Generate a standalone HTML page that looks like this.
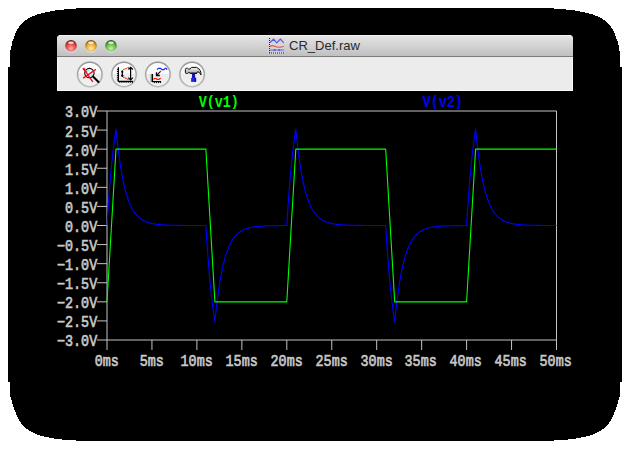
<!DOCTYPE html>
<html><head><meta charset="utf-8"><title>CR_Def.raw</title>
<style>
html,body{margin:0;padding:0;background:#fff;}
body{width:630px;height:449px;overflow:hidden;position:relative;font-family:"Liberation Sans",sans-serif;}
svg{position:absolute;left:0;top:0;display:block}
.mono text{font-family:"Liberation Mono",monospace;font-weight:normal;font-size:13.4px;fill:#c8c8c8;stroke:#c8c8c8;stroke-width:0.55px;}
.ttl{font-family:"Liberation Sans",sans-serif;font-size:13px;fill:#2a2a2a;}
</style></head><body>
<svg width="630" height="449" viewBox="0 0 630 449">
<defs>
<linearGradient id="tb" x1="0" y1="0" x2="0" y2="1"><stop offset="0" stop-color="#e6e6e6"/><stop offset="1" stop-color="#c0c0c0"/></linearGradient>
<linearGradient id="btn" x1="0" y1="0" x2="0" y2="1"><stop offset="0" stop-color="#ffffff"/><stop offset="0.5" stop-color="#f7f7f7"/><stop offset="0.5" stop-color="#ebebeb"/><stop offset="1" stop-color="#f3f3f3"/></linearGradient>
<linearGradient id="hm" x1="0" y1="0" x2="0" y2="1"><stop offset="0" stop-color="#f4f4f4"/><stop offset="0.45" stop-color="#c8c8c8"/><stop offset="1" stop-color="#8c8c8c"/></linearGradient>
<linearGradient id="bst" x1="0" y1="0" x2="0" y2="1"><stop offset="0" stop-color="#969696"/><stop offset="1" stop-color="#b8b8b8"/></linearGradient>
<linearGradient id="rdo" x1="0" y1="0" x2="0" y2="1"><stop offset="0" stop-color="#6a1010"/><stop offset="1" stop-color="#d88"/></linearGradient>
<linearGradient id="ylo" x1="0" y1="0" x2="0" y2="1"><stop offset="0" stop-color="#7a4a06"/><stop offset="1" stop-color="#e8c070"/></linearGradient>
<linearGradient id="gno" x1="0" y1="0" x2="0" y2="1"><stop offset="0" stop-color="#215416"/><stop offset="1" stop-color="#9c8"/></linearGradient>
<radialGradient id="rd" cx="0.5" cy="0.75" r="0.7"><stop offset="0" stop-color="#ffb0b0"/><stop offset="0.6" stop-color="#f0504c"/><stop offset="1" stop-color="#c42a28"/></radialGradient>
<radialGradient id="yl" cx="0.5" cy="0.75" r="0.7"><stop offset="0" stop-color="#ffeab0"/><stop offset="0.6" stop-color="#f4b440"/><stop offset="1" stop-color="#c88418"/></radialGradient>
<radialGradient id="gn" cx="0.5" cy="0.75" r="0.7"><stop offset="0" stop-color="#c8f0a8"/><stop offset="0.6" stop-color="#74c450"/><stop offset="1" stop-color="#3e9428"/></radialGradient>
<clipPath id="pc"><rect x="107" y="111" width="450" height="229"/></clipPath>
</defs>
<path d="M8.0 67.0 L10.0 67.0 L10.0 55.0 L10.5 50.5 L11.5 45.5 L12.5 41.5 L13.1 40.0 L15.6 33.0 L18.4 27.8 L22.8 22.2 L29.1 17.8 L37.3 14.5 L46.7 12.2 L57.8 10.0 L70.0 9.0 L76.0 9.0 L76.0 8.0 L554.0 8.0 L554.0 9.0 L560.0 9.0 L572.2 10.0 L583.3 12.2 L592.7 14.5 L600.9 17.8 L607.2 22.2 L611.6 27.8 L614.4 33.0 L616.9 40.0 L617.5 41.5 L618.5 45.5 L619.5 50.5 L620.0 55.0 L620.0 67.0 L622.0 67.0 L622.0 382.0 L620.0 382.0 L620.0 395.0 L618.9 399.0 L617.2 404.6 L615.0 411.2 L612.2 417.9 L608.3 424.0 L603.3 428.8 L597.7 432.4 L591.1 435.2 L583.3 437.2 L574.4 438.7 L567.7 439.6 L560.0 440.2 L554.0 440.4 L554.0 441.0 L76.0 441.0 L76.0 440.4 L70.0 440.2 L62.3 439.6 L55.6 438.7 L46.7 437.2 L38.9 435.2 L32.3 432.4 L26.7 428.8 L21.7 424.0 L17.8 417.9 L15.0 411.2 L12.8 404.6 L11.1 399.0 L10.0 395.0 L10.0 382.0 L8.0 382.0Z" fill="#000" shape-rendering="crispEdges"/>
<!-- window -->
<path d="M57 91 V39 Q57 35 61 35 H569 Q573 35 573 39 V91 Z" fill="#ececec"/>
<path d="M57 56 V39 Q57 35 61 35 H569 Q573 35 573 39 V56 Z" fill="url(#tb)"/>
<path d="M59 35.5 H571" stroke="#f2f2f2" stroke-width="1"/>
<rect x="57" y="56" width="516" height="1" fill="#7c7c7c"/>
<rect x="57" y="90" width="516" height="1" fill="#f8f8f8"/>
<rect x="57" y="57" width="1" height="34" fill="#f8f8f8"/>
<rect x="572" y="57" width="1" height="34" fill="#f8f8f8"/>
<!-- traffic lights -->
<g>
<ellipse cx="71" cy="46.9" rx="6" ry="5.8" fill="#ffffff" opacity="0.45"/>
<ellipse cx="91" cy="46.9" rx="6" ry="5.8" fill="#ffffff" opacity="0.45"/>
<ellipse cx="111" cy="46.9" rx="6" ry="5.8" fill="#ffffff" opacity="0.45"/>
<circle cx="71" cy="45.9" r="5.9" fill="url(#rdo)"/>
<circle cx="91" cy="45.9" r="5.9" fill="url(#ylo)"/>
<circle cx="111" cy="45.9" r="5.9" fill="url(#gno)"/>
<circle cx="71" cy="46.1" r="4.9" fill="url(#rd)"/>
<circle cx="91" cy="46.1" r="4.9" fill="url(#yl)"/>
<circle cx="111" cy="46.1" r="4.9" fill="url(#gn)"/>
<ellipse cx="71" cy="42.7" rx="2.9" ry="1.3" fill="#fff" opacity="0.75"/>
<ellipse cx="91" cy="42.7" rx="2.9" ry="1.3" fill="#fff" opacity="0.75"/>
<ellipse cx="111" cy="42.7" rx="2.9" ry="1.3" fill="#fff" opacity="0.75"/>
</g>
<!-- title -->
<g id="ticon">
<rect x="268" y="38" width="16" height="16" fill="#d6d6d6" opacity="0.8"/>
<path d="M269.5 38 V53.5" stroke="#222" fill="none" stroke-width="1" stroke-dasharray="1 1"/>
<path d="M269 53 H284" stroke="#222" fill="none" stroke-width="1" stroke-dasharray="1 1"/>
<path d="M270 42.6 L273.5 39.2 L276.8 42.8 L280.3 39.2 L283.8 42.8" stroke="#5656e6" fill="none" stroke-width="1.2"/>
<path d="M270 46.4 Q272 45 274.5 46.2 T280 47.2 T283.8 46" stroke="#e45050" fill="none" stroke-width="1.2"/>
<rect x="270" y="49" width="14" height="2.2" fill="#9a9ad8"/>
<path d="M273.5 50 h2 M278.5 50 h1.6" stroke="#3030c0" stroke-width="1"/>
</g>
<text class="ttl" x="289" y="50.4" textLength="71" lengthAdjust="spacingAndGlyphs">CR_Def.raw</text>
<!-- toolbar buttons -->
<g fill="none" stroke="#dcdcdc" stroke-width="0.9">
<circle cx="89.8" cy="74.5" r="13.1"/><circle cx="124" cy="74.5" r="13.1"/><circle cx="157.9" cy="74.5" r="13.1"/><circle cx="192.1" cy="74.5" r="13.1"/>
</g>
<g fill="url(#btn)" stroke="url(#bst)" stroke-width="1.4">
<circle cx="89.8" cy="74.4" r="12.2"/><circle cx="124" cy="74.4" r="12.2"/><circle cx="157.9" cy="74.4" r="12.2"/><circle cx="192.1" cy="74.4" r="12.2"/>
</g>
<!-- icon1 -->
<g>
<circle cx="89.4" cy="73.1" r="4.7" fill="#f2ffff" stroke="#0a0a0a" stroke-width="1.1"/>
<path d="M86.2 71.8 Q87.2 69.6 89.8 69.4 L88 72.6 Z" fill="#7ef0f6"/>
<path d="M92.8 74 Q92.4 76.6 89.6 76.9 L91 74.2 Z" fill="#7ef0f6"/>
<path d="M93 76.6 L98.5 82" stroke="#000" stroke-width="2.1" stroke-linecap="round"/>
<path d="M83.2 68.1 L92.8 81.9 M95.9 69.4 L83.2 78.1" stroke="#ff0a1e" stroke-width="1.4"/>
<path d="M83.2 68.1 L86 72" stroke="#ff0a1e" stroke-width="2"/>
</g>
<!-- icon2 -->
<g fill="none">
<path d="M118.4 67.2 V81.4 H132.9" stroke="#000" stroke-width="1.2"/>
<path d="M116.9 69.4h1.2 M116.9 71.5h1.2 M116.9 73.6h1.2 M116.9 75.7h1.2 M116.9 77.8h1.2 M116.9 79.9h1.2 M119.8 81.8v1.1 M121.9 81.8v1.1 M124 81.8v1.1 M126.1 81.8v1.1 M128.2 81.8v1.1 M130.3 81.8v1.1 M132.4 81.8v1.1" stroke="#000" stroke-width="1"/>
<path d="M128.9 67.4 L123.1 69.8" stroke="#ff3414" stroke-width="1.2" stroke-dasharray="1.6 0.7"/>
<path d="M123.1 76.9 L128.9 79.7" stroke="#ff3414" stroke-width="1.2" stroke-dasharray="1.6 0.7"/>
<path d="M122.3 70.6 V76.8" stroke="#000" stroke-width="1.3"/>
<path d="M120.8 72.3 L122.3 70.2 L123.8 72.3 Z M120.8 75.1 L122.3 77.2 L123.8 75.1 Z" fill="#000"/>
<path d="M130.6 67.4 V79.8" stroke="#000" stroke-width="1.2"/>
<path d="M128.4 69.5 L130.6 67.3 L132.8 69.5 M128.4 77.7 L130.6 79.9 L132.8 77.7" stroke="#000" stroke-width="1.2"/>
</g>
<!-- icon3 -->
<g fill="none">
<path d="M157 69.6 L158.3 68.3 H160.6 L161.9 69.6 H164 L165.1 68.4 H166.1 L167.1 69.7" stroke="#2222ff" stroke-width="1.2" stroke-linejoin="round"/>
<path d="M160.3 71.7 L156.8 75.1" stroke="#000" stroke-width="1.1"/>
<path d="M156.5 72.2 V75.5 H159.8" stroke="#000" stroke-width="1.3"/>
<rect x="160.1" y="70.8" width="1.1" height="1.1" fill="#c01818"/>
<path d="M152.5 73.9 V81.6 H161.1" stroke="#000" stroke-width="1.1"/>
<path d="M150.6 75h1.4 M150.6 77h1.4 M150.6 79h1.4 M150.6 81h1.4 M154.5 82v1.1 M156.5 82v1.1 M158.5 82v1.1 M160.5 82v1.1" stroke="#000" stroke-width="0.9"/>
<path d="M153.4 79.4 L154.5 78.5 H156 L157 79.4 H158.8 L160 78.6 L160.9 78.3" stroke="#ff1212" stroke-width="1.2" stroke-linejoin="round"/>
</g>
<!-- icon4 hammer -->
<g>
<path d="M185.4 69.4 Q185.4 68.3 186.6 68.3 H187.6 L188.8 69.3 L190 69 L191.4 67.4 H196.6 L198.8 68.7 L200.2 70.6 L200.9 72.6 V74.9 L199.6 72.7 L197.6 71.6 L196.8 73.3 H190.2 L188.9 72.4 L187.4 73.5 H186.4 Q185.4 73.5 185.4 72.4 Z" fill="url(#hm)" stroke="#0a0a0a" stroke-width="1" stroke-linejoin="round"/>
<rect x="190.2" y="72.7" width="6.8" height="1.2" fill="#111"/>
<rect x="192" y="73.8" width="3.1" height="4.4" fill="#1616b8"/>
<rect x="191.1" y="77.8" width="5" height="4.1" fill="#2222e2"/>
<rect x="194.6" y="77.8" width="1.5" height="4.1" fill="#1010a8"/>
</g>
<!-- plot -->
<g stroke="#c4c4c4" stroke-width="1" fill="none" shape-rendering="auto">
<path d="M107 111 H556.5 V340 H107 Z"/>
<line x1="97" y1="111.00" x2="107" y2="111.00"/><line x1="97" y1="130.08" x2="107" y2="130.08"/><line x1="97" y1="149.17" x2="107" y2="149.17"/><line x1="97" y1="168.25" x2="107" y2="168.25"/><line x1="97" y1="187.33" x2="107" y2="187.33"/><line x1="97" y1="206.42" x2="107" y2="206.42"/><line x1="97" y1="225.50" x2="107" y2="225.50"/><line x1="97" y1="244.58" x2="107" y2="244.58"/><line x1="97" y1="263.67" x2="107" y2="263.67"/><line x1="97" y1="282.75" x2="107" y2="282.75"/><line x1="97" y1="301.83" x2="107" y2="301.83"/><line x1="97" y1="320.92" x2="107" y2="320.92"/><line x1="97" y1="340.00" x2="107" y2="340.00"/><line x1="107.00" y1="340" x2="107.00" y2="350"/><line x1="151.95" y1="340" x2="151.95" y2="350"/><line x1="196.90" y1="340" x2="196.90" y2="350"/><line x1="241.85" y1="340" x2="241.85" y2="350"/><line x1="286.80" y1="340" x2="286.80" y2="350"/><line x1="331.75" y1="340" x2="331.75" y2="350"/><line x1="376.70" y1="340" x2="376.70" y2="350"/><line x1="421.65" y1="340" x2="421.65" y2="350"/><line x1="466.60" y1="340" x2="466.60" y2="350"/><line x1="511.55" y1="340" x2="511.55" y2="350"/><line x1="556.50" y1="340" x2="556.50" y2="350"/>
</g>
<g class="mono">
<text transform="translate(97.20 116.90) scale(1.000 1.200)" text-anchor="end">3.0V</text><text transform="translate(97.20 136.90) scale(1.000 1.200)" text-anchor="end">2.5V</text><text transform="translate(97.20 155.90) scale(1.000 1.200)" text-anchor="end">2.0V</text><text transform="translate(97.20 174.90) scale(1.000 1.200)" text-anchor="end">1.5V</text><text transform="translate(97.20 193.90) scale(1.000 1.200)" text-anchor="end">1.0V</text><text transform="translate(97.20 212.90) scale(1.000 1.200)" text-anchor="end">0.5V</text><text transform="translate(97.20 231.90) scale(1.000 1.200)" text-anchor="end">0.0V</text><text transform="translate(97.20 250.90) scale(1.000 1.200)" text-anchor="end">−0.5V</text><text transform="translate(97.20 269.90) scale(1.000 1.200)" text-anchor="end">−1.0V</text><text transform="translate(97.20 288.90) scale(1.000 1.200)" text-anchor="end">−1.5V</text><text transform="translate(97.20 307.90) scale(1.000 1.200)" text-anchor="end">−2.0V</text><text transform="translate(97.20 326.90) scale(1.000 1.200)" text-anchor="end">−2.5V</text><text transform="translate(97.20 345.90) scale(1.000 1.200)" text-anchor="end">−3.0V</text>
<text transform="translate(106.75 366.30) scale(1.000 1.200)" text-anchor="middle">0ms</text><text transform="translate(151.75 366.30) scale(1.000 1.200)" text-anchor="middle">5ms</text><text transform="translate(196.66 366.30) scale(1.000 1.200)" text-anchor="middle">10ms</text><text transform="translate(241.66 366.30) scale(1.000 1.200)" text-anchor="middle">15ms</text><text transform="translate(286.66 366.30) scale(1.000 1.200)" text-anchor="middle">20ms</text><text transform="translate(331.66 366.30) scale(1.000 1.200)" text-anchor="middle">25ms</text><text transform="translate(376.66 366.30) scale(1.000 1.200)" text-anchor="middle">30ms</text><text transform="translate(420.66 366.30) scale(1.000 1.200)" text-anchor="middle">35ms</text><text transform="translate(465.66 366.30) scale(1.000 1.200)" text-anchor="middle">40ms</text><text transform="translate(510.66 366.30) scale(1.000 1.200)" text-anchor="middle">45ms</text><text transform="translate(555.66 366.30) scale(1.000 1.200)" text-anchor="middle">50ms</text>
<text transform="translate(198.70 106.9) scale(1 1.200)" style="fill:#00ff00;stroke:none;font-weight:bold">V</text><text transform="translate(206.74 105.8) scale(1 1.046)" style="fill:#00ff00;stroke:none;font-weight:bold">(</text><text transform="translate(214.78 106.9) scale(1 1.200)" style="fill:#00ff00;stroke:none;font-weight:bold">v</text><text transform="translate(222.82 106.9) scale(1 1.200)" style="fill:#00ff00;stroke:none;font-weight:bold">1</text><text transform="translate(230.86 105.8) scale(1 1.046)" style="fill:#00ff00;stroke:none;font-weight:bold">)</text>
<text transform="translate(422.60 106.9) scale(1 1.200)" style="fill:#0000ff;stroke:none;font-weight:bold">V</text><text transform="translate(430.64 105.8) scale(1 1.046)" style="fill:#0000ff;stroke:none;font-weight:bold">(</text><text transform="translate(438.68 106.9) scale(1 1.200)" style="fill:#0000ff;stroke:none;font-weight:bold">v</text><text transform="translate(446.72 106.9) scale(1 1.200)" style="fill:#0000ff;stroke:none;font-weight:bold">2</text><text transform="translate(454.76 105.8) scale(1 1.046)" style="fill:#0000ff;stroke:none;font-weight:bold">)</text>
</g>
<g fill="none" stroke-width="1.1" stroke-linejoin="round">
<path d="M107.00 225.50 L107.45 218.15 L107.90 211.14 L108.35 204.47 L108.80 198.11 L109.25 192.05 L109.70 186.28 L110.15 180.79 L110.60 175.55 L111.05 170.56 L111.50 165.81 L111.94 161.29 L112.39 156.98 L112.84 152.87 L113.29 148.96 L113.74 145.23 L114.19 141.68 L114.64 138.30 L115.09 135.07 L115.54 132.00 L115.99 129.08 L116.44 133.65 L116.89 138.00 L117.34 142.15 L117.79 146.10 L118.24 149.86 L118.69 153.44 L119.14 156.86 L119.59 160.11 L120.04 163.21 L120.48 166.16 L120.93 168.97 L121.38 171.65 L121.83 174.20 L122.28 176.63 L122.73 178.95 L123.18 181.15 L123.63 183.26 L124.08 185.26 L124.53 187.16 L124.98 188.98 L125.43 190.71 L125.88 192.36 L126.33 193.93 L126.78 195.43 L127.23 196.85 L127.68 198.21 L128.13 199.50 L128.58 200.73 L129.03 201.91 L129.47 203.03 L129.92 204.09 L130.37 205.10 L130.82 206.07 L131.27 206.99 L131.72 207.87 L132.17 208.70 L132.62 209.50 L133.07 210.26 L133.52 210.98 L133.97 211.67 L134.42 212.32 L134.87 212.95 L135.32 213.54 L135.77 214.11 L136.22 214.65 L136.67 215.16 L137.12 215.65 L137.57 216.12 L138.02 216.56 L138.47 216.99 L138.91 217.39 L139.36 217.78 L139.81 218.14 L140.26 218.49 L140.71 218.82 L141.16 219.14 L141.61 219.44 L142.06 219.73 L142.51 220.00 L142.96 220.26 L143.41 220.51 L143.86 220.75 L144.31 220.97 L144.76 221.19 L145.21 221.39 L145.66 221.58 L146.11 221.77 L146.56 221.95 L147.01 222.12 L147.45 222.28 L147.90 222.43 L148.35 222.57 L148.80 222.71 L149.25 222.84 L149.70 222.97 L150.15 223.09 L150.60 223.20 L151.05 223.31 L151.50 223.42 L151.95 223.52 L152.40 223.61 L152.85 223.70 L153.30 223.78 L153.75 223.87 L154.20 223.94 L154.65 224.02 L155.10 224.09 L155.55 224.15 L156.00 224.22 L156.44 224.28 L156.89 224.34 L157.34 224.39 L157.79 224.44 L158.24 224.49 L158.69 224.54 L159.14 224.59 L159.59 224.63 L160.04 224.67 L160.49 224.71 L160.94 224.75 L161.39 224.78 L161.84 224.82 L162.29 224.85 L162.74 224.88 L163.19 224.91 L163.64 224.94 L164.09 224.96 L164.54 224.99 L164.99 225.01 L165.44 225.04 L165.88 225.06 L166.33 225.08 L166.78 225.10 L167.23 225.12 L167.68 225.14 L168.13 225.15 L168.58 225.17 L169.03 225.19 L169.48 225.20 L169.93 225.22 L170.38 225.23 L170.83 225.24 L171.28 225.25 L171.73 225.27 L172.18 225.28 L172.63 225.29 L173.08 225.30 L173.53 225.31 L173.98 225.32 L174.43 225.32 L174.87 225.33 L175.32 225.34 L175.77 225.35 L176.22 225.36 L176.67 225.36 L177.12 225.37 L177.57 225.38 L178.02 225.38 L178.47 225.39 L178.92 225.39 L179.37 225.40 L179.82 225.40 L180.27 225.41 L180.72 225.41 L181.17 225.42 L181.62 225.42 L182.07 225.42 L182.52 225.43 L182.97 225.43 L183.42 225.43 L183.86 225.44 L184.31 225.44 L184.76 225.44 L185.21 225.45 L185.66 225.45 L186.11 225.45 L186.56 225.45 L187.01 225.46 L187.46 225.46 L187.91 225.46 L188.36 225.46 L188.81 225.46 L189.26 225.46 L189.71 225.47 L190.16 225.47 L190.61 225.47 L191.06 225.47 L191.51 225.47 L191.96 225.47 L192.41 225.47 L192.85 225.48 L193.30 225.48 L193.75 225.48 L194.20 225.48 L194.65 225.48 L195.10 225.48 L195.55 225.48 L196.00 225.48 L196.45 225.48 L196.90 225.48 L197.35 225.49 L197.80 225.49 L198.25 225.49 L198.70 225.49 L199.15 225.49 L199.60 225.49 L200.05 225.49 L200.50 225.49 L200.95 225.49 L201.39 225.49 L201.84 225.49 L202.29 225.49 L202.74 225.49 L203.19 225.49 L203.64 225.49 L204.09 225.49 L204.54 225.49 L204.99 225.49 L205.44 225.49 L205.89 225.49 L206.34 232.85 L206.79 239.85 L207.24 246.53 L207.69 252.89 L208.14 258.94 L208.59 264.71 L209.04 270.21 L209.49 275.44 L209.94 280.43 L210.38 285.18 L210.83 289.71 L211.28 294.02 L211.73 298.13 L212.18 302.04 L212.63 305.77 L213.08 309.32 L213.53 312.70 L213.98 315.92 L214.43 318.99 L214.88 321.92 L215.33 317.35 L215.78 313.00 L216.23 308.85 L216.68 304.90 L217.13 301.14 L217.58 297.55 L218.03 294.14 L218.48 290.89 L218.93 287.79 L219.38 284.84 L219.82 282.03 L220.27 279.35 L220.72 276.80 L221.17 274.37 L221.62 272.05 L222.07 269.84 L222.52 267.74 L222.97 265.74 L223.42 263.83 L223.87 262.02 L224.32 260.29 L224.77 258.64 L225.22 257.07 L225.67 255.57 L226.12 254.15 L226.57 252.79 L227.02 251.50 L227.47 250.27 L227.92 249.09 L228.37 247.97 L228.81 246.91 L229.26 245.89 L229.71 244.93 L230.16 244.01 L230.61 243.13 L231.06 242.30 L231.51 241.50 L231.96 240.74 L232.41 240.02 L232.86 239.33 L233.31 238.68 L233.76 238.05 L234.21 237.46 L234.66 236.89 L235.11 236.35 L235.56 235.84 L236.01 235.35 L236.46 234.88 L236.91 234.44 L237.35 234.01 L237.80 233.61 L238.25 233.22 L238.70 232.86 L239.15 232.51 L239.60 232.18 L240.05 231.86 L240.50 231.56 L240.95 231.27 L241.40 231.00 L241.85 230.74 L242.30 230.49 L242.75 230.25 L243.20 230.03 L243.65 229.81 L244.10 229.61 L244.55 229.41 L245.00 229.23 L245.45 229.05 L245.90 228.88 L246.34 228.72 L246.79 228.57 L247.24 228.43 L247.69 228.29 L248.14 228.16 L248.59 228.03 L249.04 227.91 L249.49 227.80 L249.94 227.69 L250.39 227.58 L250.84 227.48 L251.29 227.39 L251.74 227.30 L252.19 227.22 L252.64 227.13 L253.09 227.06 L253.54 226.98 L253.99 226.91 L254.44 226.85 L254.89 226.78 L255.34 226.72 L255.78 226.66 L256.23 226.61 L256.68 226.56 L257.13 226.51 L257.58 226.46 L258.03 226.41 L258.48 226.37 L258.93 226.33 L259.38 226.29 L259.83 226.25 L260.28 226.22 L260.73 226.18 L261.18 226.15 L261.63 226.12 L262.08 226.09 L262.53 226.06 L262.98 226.03 L263.43 226.01 L263.88 225.99 L264.32 225.96 L264.77 225.94 L265.22 225.92 L265.67 225.90 L266.12 225.88 L266.57 225.86 L267.02 225.85 L267.47 225.83 L267.92 225.81 L268.37 225.80 L268.82 225.78 L269.27 225.77 L269.72 225.76 L270.17 225.75 L270.62 225.73 L271.07 225.72 L271.52 225.71 L271.97 225.70 L272.42 225.69 L272.87 225.68 L273.31 225.68 L273.76 225.67 L274.21 225.66 L274.66 225.65 L275.11 225.64 L275.56 225.64 L276.01 225.63 L276.46 225.62 L276.91 225.62 L277.36 225.61 L277.81 225.61 L278.26 225.60 L278.71 225.60 L279.16 225.59 L279.61 225.59 L280.06 225.58 L280.51 225.58 L280.96 225.58 L281.41 225.57 L281.86 225.57 L282.31 225.57 L282.75 225.56 L283.20 225.56 L283.65 225.56 L284.10 225.55 L284.55 225.55 L285.00 225.55 L285.45 225.55 L285.90 225.54 L286.35 225.54 L286.80 225.54 L287.25 218.18 L287.70 211.18 L288.15 204.50 L288.60 198.14 L289.05 192.08 L289.50 186.31 L289.95 180.82 L290.40 175.58 L290.85 170.59 L291.29 165.84 L291.74 161.31 L292.19 157.00 L292.64 152.89 L293.09 148.98 L293.54 145.25 L293.99 141.70 L294.44 138.31 L294.89 135.09 L295.34 132.02 L295.79 129.10 L296.24 133.66 L296.69 138.02 L297.14 142.16 L297.59 146.11 L298.04 149.87 L298.49 153.46 L298.94 156.87 L299.39 160.12 L299.84 163.22 L300.28 166.17 L300.73 168.98 L301.18 171.66 L301.63 174.21 L302.08 176.64 L302.53 178.96 L302.98 181.16 L303.43 183.26 L303.88 185.26 L304.33 187.17 L304.78 188.99 L305.23 190.72 L305.68 192.37 L306.13 193.94 L306.58 195.43 L307.03 196.86 L307.48 198.21 L307.93 199.51 L308.38 200.74 L308.83 201.91 L309.27 203.03 L309.72 204.09 L310.17 205.11 L310.62 206.07 L311.07 206.99 L311.52 207.87 L311.97 208.71 L312.42 209.50 L312.87 210.26 L313.32 210.98 L313.77 211.67 L314.22 212.33 L314.67 212.95 L315.12 213.54 L315.57 214.11 L316.02 214.65 L316.47 215.17 L316.92 215.65 L317.37 216.12 L317.82 216.57 L318.26 216.99 L318.71 217.39 L319.16 217.78 L319.61 218.14 L320.06 218.49 L320.51 218.82 L320.96 219.14 L321.41 219.44 L321.86 219.73 L322.31 220.00 L322.76 220.26 L323.21 220.51 L323.66 220.75 L324.11 220.97 L324.56 221.19 L325.01 221.39 L325.46 221.59 L325.91 221.77 L326.36 221.95 L326.81 222.12 L327.25 222.28 L327.70 222.43 L328.15 222.57 L328.60 222.71 L329.05 222.85 L329.50 222.97 L329.95 223.09 L330.40 223.21 L330.85 223.31 L331.30 223.42 L331.75 223.52 L332.20 223.61 L332.65 223.70 L333.10 223.78 L333.55 223.87 L334.00 223.94 L334.45 224.02 L334.90 224.09 L335.35 224.15 L335.80 224.22 L336.25 224.28 L336.69 224.34 L337.14 224.39 L337.59 224.44 L338.04 224.49 L338.49 224.54 L338.94 224.59 L339.39 224.63 L339.84 224.67 L340.29 224.71 L340.74 224.75 L341.19 224.78 L341.64 224.82 L342.09 224.85 L342.54 224.88 L342.99 224.91 L343.44 224.94 L343.89 224.97 L344.34 224.99 L344.79 225.01 L345.24 225.04 L345.68 225.06 L346.13 225.08 L346.58 225.10 L347.03 225.12 L347.48 225.14 L347.93 225.15 L348.38 225.17 L348.83 225.19 L349.28 225.20 L349.73 225.22 L350.18 225.23 L350.63 225.24 L351.08 225.25 L351.53 225.27 L351.98 225.28 L352.43 225.29 L352.88 225.30 L353.33 225.31 L353.78 225.32 L354.23 225.32 L354.67 225.33 L355.12 225.34 L355.57 225.35 L356.02 225.36 L356.47 225.36 L356.92 225.37 L357.37 225.38 L357.82 225.38 L358.27 225.39 L358.72 225.39 L359.17 225.40 L359.62 225.40 L360.07 225.41 L360.52 225.41 L360.97 225.42 L361.42 225.42 L361.87 225.42 L362.32 225.43 L362.77 225.43 L363.21 225.43 L363.66 225.44 L364.11 225.44 L364.56 225.44 L365.01 225.45 L365.46 225.45 L365.91 225.45 L366.36 225.45 L366.81 225.46 L367.26 225.46 L367.71 225.46 L368.16 225.46 L368.61 225.46 L369.06 225.46 L369.51 225.47 L369.96 225.47 L370.41 225.47 L370.86 225.47 L371.31 225.47 L371.76 225.47 L372.20 225.47 L372.65 225.48 L373.10 225.48 L373.55 225.48 L374.00 225.48 L374.45 225.48 L374.90 225.48 L375.35 225.48 L375.80 225.48 L376.25 225.48 L376.70 225.48 L377.15 225.49 L377.60 225.49 L378.05 225.49 L378.50 225.49 L378.95 225.49 L379.40 225.49 L379.85 225.49 L380.30 225.49 L380.75 225.49 L381.19 225.49 L381.64 225.49 L382.09 225.49 L382.54 225.49 L382.99 225.49 L383.44 225.49 L383.89 225.49 L384.34 225.49 L384.79 225.49 L385.24 225.49 L385.69 225.49 L386.14 232.85 L386.59 239.85 L387.04 246.53 L387.49 252.89 L387.94 258.94 L388.39 264.71 L388.84 270.21 L389.29 275.44 L389.74 280.43 L390.19 285.18 L390.63 289.71 L391.08 294.02 L391.53 298.13 L391.98 302.04 L392.43 305.77 L392.88 309.32 L393.33 312.70 L393.78 315.92 L394.23 318.99 L394.68 321.92 L395.13 317.35 L395.58 313.00 L396.03 308.85 L396.48 304.90 L396.93 301.14 L397.38 297.55 L397.83 294.14 L398.28 290.89 L398.73 287.79 L399.18 284.84 L399.62 282.03 L400.07 279.35 L400.52 276.80 L400.97 274.37 L401.42 272.05 L401.87 269.84 L402.32 267.74 L402.77 265.74 L403.22 263.83 L403.67 262.02 L404.12 260.29 L404.57 258.64 L405.02 257.07 L405.47 255.57 L405.92 254.15 L406.37 252.79 L406.82 251.50 L407.27 250.27 L407.72 249.09 L408.17 247.97 L408.61 246.91 L409.06 245.89 L409.51 244.93 L409.96 244.01 L410.41 243.13 L410.86 242.30 L411.31 241.50 L411.76 240.74 L412.21 240.02 L412.66 239.33 L413.11 238.68 L413.56 238.05 L414.01 237.46 L414.46 236.89 L414.91 236.35 L415.36 235.84 L415.81 235.35 L416.26 234.88 L416.71 234.44 L417.15 234.01 L417.60 233.61 L418.05 233.22 L418.50 232.86 L418.95 232.51 L419.40 232.18 L419.85 231.86 L420.30 231.56 L420.75 231.27 L421.20 231.00 L421.65 230.74 L422.10 230.49 L422.55 230.25 L423.00 230.03 L423.45 229.81 L423.90 229.61 L424.35 229.41 L424.80 229.23 L425.25 229.05 L425.70 228.88 L426.14 228.72 L426.59 228.57 L427.04 228.43 L427.49 228.29 L427.94 228.16 L428.39 228.03 L428.84 227.91 L429.29 227.80 L429.74 227.69 L430.19 227.58 L430.64 227.48 L431.09 227.39 L431.54 227.30 L431.99 227.22 L432.44 227.13 L432.89 227.06 L433.34 226.98 L433.79 226.91 L434.24 226.85 L434.69 226.78 L435.13 226.72 L435.58 226.66 L436.03 226.61 L436.48 226.56 L436.93 226.51 L437.38 226.46 L437.83 226.41 L438.28 226.37 L438.73 226.33 L439.18 226.29 L439.63 226.25 L440.08 226.22 L440.53 226.18 L440.98 226.15 L441.43 226.12 L441.88 226.09 L442.33 226.06 L442.78 226.03 L443.23 226.01 L443.68 225.99 L444.12 225.96 L444.57 225.94 L445.02 225.92 L445.47 225.90 L445.92 225.88 L446.37 225.86 L446.82 225.85 L447.27 225.83 L447.72 225.81 L448.17 225.80 L448.62 225.78 L449.07 225.77 L449.52 225.76 L449.97 225.75 L450.42 225.73 L450.87 225.72 L451.32 225.71 L451.77 225.70 L452.22 225.69 L452.67 225.68 L453.12 225.68 L453.56 225.67 L454.01 225.66 L454.46 225.65 L454.91 225.64 L455.36 225.64 L455.81 225.63 L456.26 225.62 L456.71 225.62 L457.16 225.61 L457.61 225.61 L458.06 225.60 L458.51 225.60 L458.96 225.59 L459.41 225.59 L459.86 225.58 L460.31 225.58 L460.76 225.58 L461.21 225.57 L461.66 225.57 L462.11 225.57 L462.55 225.56 L463.00 225.56 L463.45 225.56 L463.90 225.55 L464.35 225.55 L464.80 225.55 L465.25 225.55 L465.70 225.54 L466.15 225.54 L466.60 225.54 L467.05 218.18 L467.50 211.18 L467.95 204.50 L468.40 198.14 L468.85 192.08 L469.30 186.31 L469.75 180.82 L470.20 175.58 L470.65 170.59 L471.10 165.84 L471.54 161.31 L471.99 157.00 L472.44 152.89 L472.89 148.98 L473.34 145.25 L473.79 141.70 L474.24 138.31 L474.69 135.09 L475.14 132.02 L475.59 129.10 L476.04 133.66 L476.49 138.02 L476.94 142.16 L477.39 146.11 L477.84 149.87 L478.29 153.46 L478.74 156.87 L479.19 160.12 L479.64 163.22 L480.08 166.17 L480.53 168.98 L480.98 171.66 L481.43 174.21 L481.88 176.64 L482.33 178.96 L482.78 181.16 L483.23 183.26 L483.68 185.26 L484.13 187.17 L484.58 188.99 L485.03 190.72 L485.48 192.37 L485.93 193.94 L486.38 195.43 L486.83 196.86 L487.28 198.21 L487.73 199.51 L488.18 200.74 L488.63 201.91 L489.07 203.03 L489.52 204.09 L489.97 205.11 L490.42 206.07 L490.87 206.99 L491.32 207.87 L491.77 208.71 L492.22 209.50 L492.67 210.26 L493.12 210.98 L493.57 211.67 L494.02 212.33 L494.47 212.95 L494.92 213.54 L495.37 214.11 L495.82 214.65 L496.27 215.17 L496.72 215.65 L497.17 216.12 L497.62 216.57 L498.06 216.99 L498.51 217.39 L498.96 217.78 L499.41 218.14 L499.86 218.49 L500.31 218.82 L500.76 219.14 L501.21 219.44 L501.66 219.73 L502.11 220.00 L502.56 220.26 L503.01 220.51 L503.46 220.75 L503.91 220.97 L504.36 221.19 L504.81 221.39 L505.26 221.59 L505.71 221.77 L506.16 221.95 L506.61 222.12 L507.06 222.28 L507.50 222.43 L507.95 222.57 L508.40 222.71 L508.85 222.85 L509.30 222.97 L509.75 223.09 L510.20 223.21 L510.65 223.31 L511.10 223.42 L511.55 223.52 L512.00 223.61 L512.45 223.70 L512.90 223.78 L513.35 223.87 L513.80 223.94 L514.25 224.02 L514.70 224.09 L515.15 224.15 L515.60 224.22 L516.05 224.28 L516.49 224.34 L516.94 224.39 L517.39 224.44 L517.84 224.49 L518.29 224.54 L518.74 224.59 L519.19 224.63 L519.64 224.67 L520.09 224.71 L520.54 224.75 L520.99 224.78 L521.44 224.82 L521.89 224.85 L522.34 224.88 L522.79 224.91 L523.24 224.94 L523.69 224.97 L524.14 224.99 L524.59 225.01 L525.04 225.04 L525.48 225.06 L525.93 225.08 L526.38 225.10 L526.83 225.12 L527.28 225.14 L527.73 225.15 L528.18 225.17 L528.63 225.19 L529.08 225.20 L529.53 225.22 L529.98 225.23 L530.43 225.24 L530.88 225.25 L531.33 225.27 L531.78 225.28 L532.23 225.29 L532.68 225.30 L533.13 225.31 L533.58 225.32 L534.02 225.32 L534.47 225.33 L534.92 225.34 L535.37 225.35 L535.82 225.36 L536.27 225.36 L536.72 225.37 L537.17 225.38 L537.62 225.38 L538.07 225.39 L538.52 225.39 L538.97 225.40 L539.42 225.40 L539.87 225.41 L540.32 225.41 L540.77 225.42 L541.22 225.42 L541.67 225.42 L542.12 225.43 L542.57 225.43 L543.01 225.43 L543.46 225.44 L543.91 225.44 L544.36 225.44 L544.81 225.45 L545.26 225.45 L545.71 225.45 L546.16 225.45 L546.61 225.46 L547.06 225.46 L547.51 225.46 L547.96 225.46 L548.41 225.46 L548.86 225.46 L549.31 225.47 L549.76 225.47 L550.21 225.47 L550.66 225.47 L551.11 225.47 L551.56 225.47 L552.00 225.47 L552.45 225.48 L552.90 225.48 L553.35 225.48 L553.80 225.48 L554.25 225.48 L554.70 225.48 L555.15 225.48 L555.60 225.48 L556.05 225.48 L556.50 225.48" stroke="#0000ff"/>
<path d="M107.00 301.83 L115.99 149.17 L205.89 149.17 L214.88 301.83 L286.80 301.83 L295.79 149.17 L385.69 149.17 L394.68 301.83 L466.60 301.83 L475.59 149.17 L556.50 149.17" stroke="#00ff00"/>
</g>
</svg>
</body></html>
